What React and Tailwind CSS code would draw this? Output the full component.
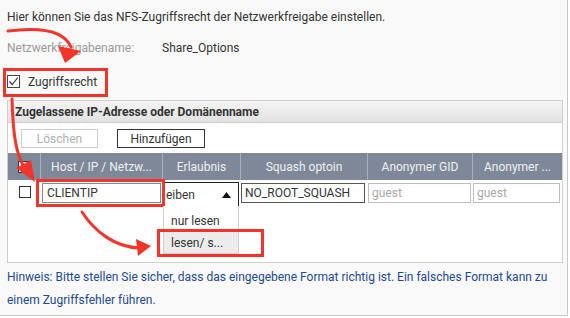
import React from "react";

export default function App() {
  return (
    <div className="relative w-[568px] h-[316px] bg-[#f9f9f9] border-r border-b border-[#c8c8c8] font-['Roboto',sans-serif] text-[12px] text-[#333]">
      <div className="px-[7px]">
        {/* Beschreibung */}
        <div className="h-[34px] flex items-center">
          Hier können Sie das NFS-Zugriffsrecht der Netzwerkfreigabe einstellen.
        </div>
        <div className="h-[28px] flex items-center">
          <span className="w-[155px] text-[#9a9a9a]">Netzwerkfreigabename:</span>
          <span>Share_Options</span>
        </div>
        <div className="h-[38px] flex items-center gap-[8px] pt-[1px]">
          <span className="w-[13px] h-[13px] border border-[#444] bg-white flex items-center justify-center">
            <svg width="11" height="11" viewBox="0 0 11 11">
              <path d="M1.5 5.5 L4.2 8.5 L9.8 1.5" fill="none" stroke="#333" strokeWidth="1.2" />
            </svg>
          </span>
          <span>Zugriffsrecht</span>
        </div>

        {/* Zugelassene IP-Adressen */}
        <div className="w-[556px] h-[163px] bg-white border border-[#cfcfcf] flex flex-col">
          <div className="h-[22px] flex items-center px-[7px] font-bold bg-gradient-to-b from-[#f4f4f4] to-[#e2e2e2] border-b border-[#cfcfcf]">
            Zugelassene IP-Adresse oder Domänenname
          </div>
          <div className="h-[30px] flex items-center pl-[13px] gap-[19px]">
            <button className="w-[77px] h-[19px] border border-[#cccccc] bg-white text-[#b0b0b0] text-[12px]">
              Löschen
            </button>
            <button className="w-[88px] h-[19px] border border-[#333] bg-white text-[#333] text-[12px]">
              Hinzufügen
            </button>
          </div>
          <div className="h-[27px] flex bg-[#7e8899] text-[#f0f0f0]">
            <div className="w-[33px] flex items-center justify-center border-r border-[#a8b0bc]">
              <span className="w-[12px] h-[12px] bg-white border border-[#333]"></span>
            </div>
            <div className="w-[122px] flex items-center justify-center border-r border-[#a8b0bc]">Host / IP / Netzw...</div>
            <div className="w-[78px] flex items-center justify-center border-r border-[#a8b0bc]">Erlaubnis</div>
            <div className="w-[127px] flex items-center justify-center border-r border-[#a8b0bc]">Squash optoin</div>
            <div className="w-[105px] flex items-center justify-center border-r border-[#a8b0bc]">Anonymer GID</div>
            <div className="w-[89px] flex items-center justify-center">Anonymer ...</div>
          </div>
          <div className="h-[26px] flex items-center">
            <div className="w-[33px] flex justify-center pb-[3px]">
              <span className="w-[12px] h-[12px] bg-white border border-[#333]"></span>
            </div>
            <div className="w-[122px] pl-[1px] pr-[2px]">
              <div className="h-[20px] border border-[#888] flex items-center px-[4px]">CLIENTIP</div>
            </div>
            <div className="w-[78px] relative h-[26px]">
              <div className="absolute left-0 top-[2px] w-[76px] h-[24px] border-t border-x border-[#222] flex items-center justify-between pl-[2px] pr-[7px] bg-white">
                <span className="w-[40px] overflow-hidden whitespace-nowrap">
                  <span className="inline-block ml-[-4px]">reiben</span>
                </span>
                <svg width="9" height="6" viewBox="0 0 9 6">
                  <path d="M0 6 L4.5 0 L9 6 Z" fill="#111" />
                </svg>
              </div>
              <div className="absolute left-0 top-[26px] w-[76px] h-[48px] bg-white border-x border-b border-[#d0d0d0] pt-[4px] flex flex-col z-10">
                <div className="h-[22px] flex items-center pl-[7px]">nur lesen</div>
                <div className="h-[21px] flex items-center pl-[7px] bg-[#ececec]">lesen/ s...</div>
              </div>
            </div>
            <div className="w-[127px] pr-[3px]">
              <div className="h-[20px] border border-[#555] flex items-center px-[3px]">NO_ROOT_SQUASH</div>
            </div>
            <div className="w-[105px] pr-[2px]">
              <div className="h-[20px] border border-[#bdbdbd] flex items-center px-[3px] text-[#a8a8a8]">guest</div>
            </div>
            <div className="w-[89px] pr-[2px]">
              <div className="h-[20px] border border-[#bdbdbd] flex items-center px-[3px] text-[#a8a8a8]">guest</div>
            </div>
          </div>
        </div>

        {/* Hinweis */}
        <p className="pt-[3px] leading-[23px] text-[#1d4a8e]">
          Hinweis: Bitte stellen Sie sicher, dass das eingegebene Format richtig ist. Ein falsches Format kann zu einem Zugriffsfehler führen.
        </p>
      </div>

      {/* Markierungen */}
      <div className="absolute left-[3px] top-[68px] w-[105px] h-[29px] border-[3px] border-[#f2352b] pointer-events-none"></div>
      <div className="absolute left-[36px] top-[179px] w-[129px] h-[28px] border-[3px] border-[#f2352b] pointer-events-none"></div>
      <div className="absolute left-[157px] top-[229px] w-[107px] h-[28px] border-[3px] border-[#f2352b] pointer-events-none z-20"></div>
      <svg className="absolute left-0 top-0 pointer-events-none z-20" width="568" height="316" viewBox="0 0 568 316">
        <path d="M8 31 C40 27 64 30 71 47" fill="none" stroke="#f2352b" strokeWidth="3" strokeLinecap="round" />
        <polygon points="58,46 81,51 65,63" fill="#f2352b" />
        <path d="M12 99 C13 130 15 152 24 167" fill="none" stroke="#f2352b" strokeWidth="3" strokeLinecap="round" />
        <polygon points="16,168 31,160 35,182" fill="#f2352b" />
        <path d="M82 212 C95 232 115 247 139 248" fill="none" stroke="#f2352b" strokeWidth="3" strokeLinecap="round" />
        <polygon points="136,239 138,256 151,246" fill="#f2352b" />
      </svg>
    </div>
  );
}
